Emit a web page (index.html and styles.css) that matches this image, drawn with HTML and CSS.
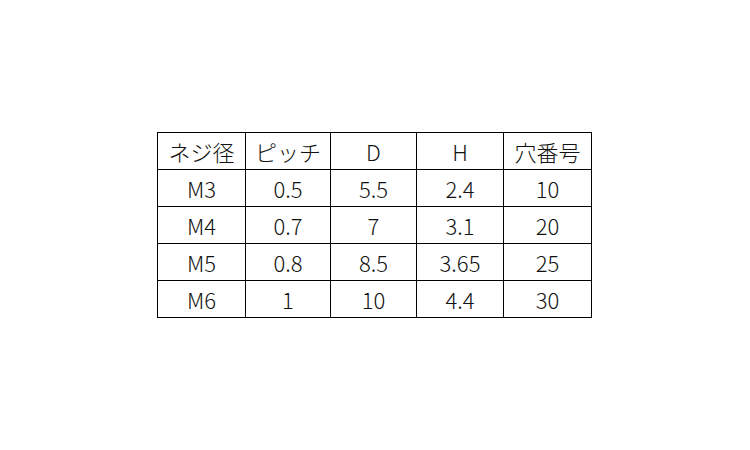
FILE: index.html
```html
<!DOCTYPE html>
<html lang="ja">
<head>
<meta charset="utf-8">
<link rel="stylesheet" href="styles.css">
</head>
<body>
<div class="page">
<table class="spec">
<colgroup>
<col class="c1"><col class="c2"><col class="c3"><col class="c4"><col class="c5">
</colgroup>
<tr><td>ネジ径</td><td>ピッチ</td><td>D</td><td>H</td><td>穴番号</td></tr>
<tr><td>M3</td><td>0.5</td><td>5.5</td><td>2.4</td><td>10</td></tr>
<tr><td>M4</td><td>0.7</td><td>7</td><td>3.1</td><td>20</td></tr>
<tr><td>M5</td><td>0.8</td><td>8.5</td><td>3.65</td><td>25</td></tr>
<tr><td>M6</td><td>1</td><td>10</td><td>4.4</td><td>30</td></tr>
</table>
</div>
</body>
</html>
```
FILE: styles.css
```css
html, body {
  margin: 0;
  padding: 0;
  background: #ffffff;
}
.page {
  padding: 132px 0 0 157px;
}
.spec {
  border-collapse: collapse;
  table-layout: fixed;
  width: 435px;
  font-family: "Noto Sans CJK JP", "Noto Sans", sans-serif;
  font-size: 22px;
  color: #111111;
}
.c1 { width: 88px; }
.c2 { width: 85px; }
.c3 { width: 86px; }
.c4 { width: 87px; }
.c5 { width: 88px; }
.spec td {
  border: 1px solid #000000;
  height: 36px;
  padding: 0;
  text-align: center;
  vertical-align: middle;
  line-height: 24px;
  font-weight: 300;
}
```
